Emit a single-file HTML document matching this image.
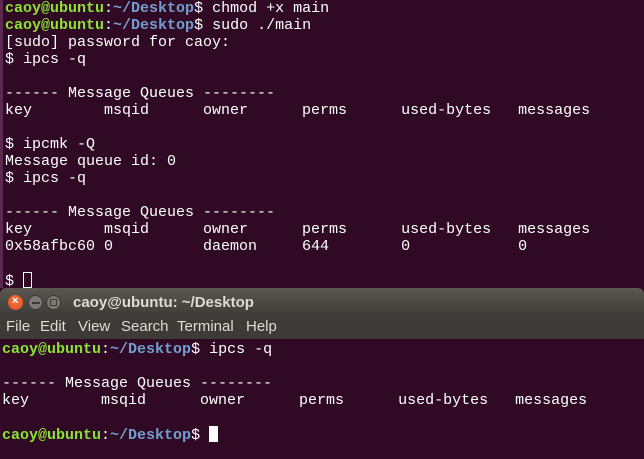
<!DOCTYPE html>
<html><head><style>
body{margin:0;width:644px;height:459px;overflow:hidden;background:#300a24;font-family:"Liberation Mono",monospace;}
.t{position:absolute;left:0;top:0;width:644px;height:288px;background:#300a24;border-left:3px solid #5c2a50;box-sizing:border-box}
pre{margin:0;font-family:"Liberation Mono",monospace;font-size:15px;line-height:17px;color:#fff;white-space:pre}
.g{color:#8ae234;font-weight:bold}.b{color:#729fcf;font-weight:bold}
.tb{position:absolute;left:0;top:288px;width:644px;height:28px;background:linear-gradient(#5a5850,#3c3b37);border-radius:6px 6px 0 0}
.mb{position:absolute;left:0;top:316px;width:644px;height:23px;background:#3c3b37;font-family:"Liberation Sans",sans-serif;font-size:15px;color:#dfdbd2}
.mb span{position:absolute;top:2px}
.btn{position:absolute;top:295px;width:15px;height:15px;border-radius:50%;}
.t2{position:absolute;left:0;top:339px;width:644px;height:120px;background:#300a24}
.cur{display:inline-block;width:9px;height:16px;border:1px solid #fff;box-sizing:border-box;vertical-align:-3px}
</style></head><body>
<div class="t"><pre style="padding:0 0 0 2px"><span class="g">caoy@ubuntu</span>:<span class="b">~/Desktop</span>$ chmod +x main
<span class="g">caoy@ubuntu</span>:<span class="b">~/Desktop</span>$ sudo ./main
[sudo] password for caoy:
$ ipcs -q

------ Message Queues --------
key        msqid      owner      perms      used-bytes   messages    

$ ipcmk -Q
Message queue id: 0
$ ipcs -q

------ Message Queues --------
key        msqid      owner      perms      used-bytes   messages    
0x58afbc60 0          daemon     644        0            0           

$ <span class="cur"></span></pre></div>
<div class="tb"></div>
<div class="btn" style="left:8px;background:radial-gradient(circle at 50% 40%,#f4774a,#df4a16);"></div>
<span style="position:absolute;left:12px;top:295px;color:#fff;font:bold 11px 'Liberation Sans',sans-serif">×</span>
<div class="btn" style="left:28px;background:#7a7974;border:1px solid #3a3935;box-sizing:border-box"></div>
<div style="position:absolute;left:32px;top:302px;width:8px;height:2px;background:#3c3b37"></div>
<div class="btn" style="left:46px;background:#7a7974;border:1px solid #3a3935;box-sizing:border-box"></div>
<div style="position:absolute;left:50px;top:299px;width:7px;height:7px;border:1px solid #3c3b37;box-sizing:border-box"></div>
<div style="position:absolute;left:73px;top:294px;font:bold 15px 'Liberation Sans',sans-serif;color:#dfdbd2">caoy@ubuntu: ~/Desktop</div>
<div class="mb"><span style="left:6px">File</span><span style="left:40px">Edit</span><span style="left:78px">View</span><span style="left:121px">Search</span><span style="left:177px">Terminal</span><span style="left:246px">Help</span></div>
<div class="t2"><pre style="padding:2px 0 0 2px"><span class="g">caoy@ubuntu</span>:<span class="b">~/Desktop</span>$ ipcs -q

------ Message Queues --------
key        msqid      owner      perms      used-bytes   messages    

<span class="g">caoy@ubuntu</span>:<span class="b">~/Desktop</span>$ <span class="cur" style="background:#fff"></span></pre></div>
</body></html>
